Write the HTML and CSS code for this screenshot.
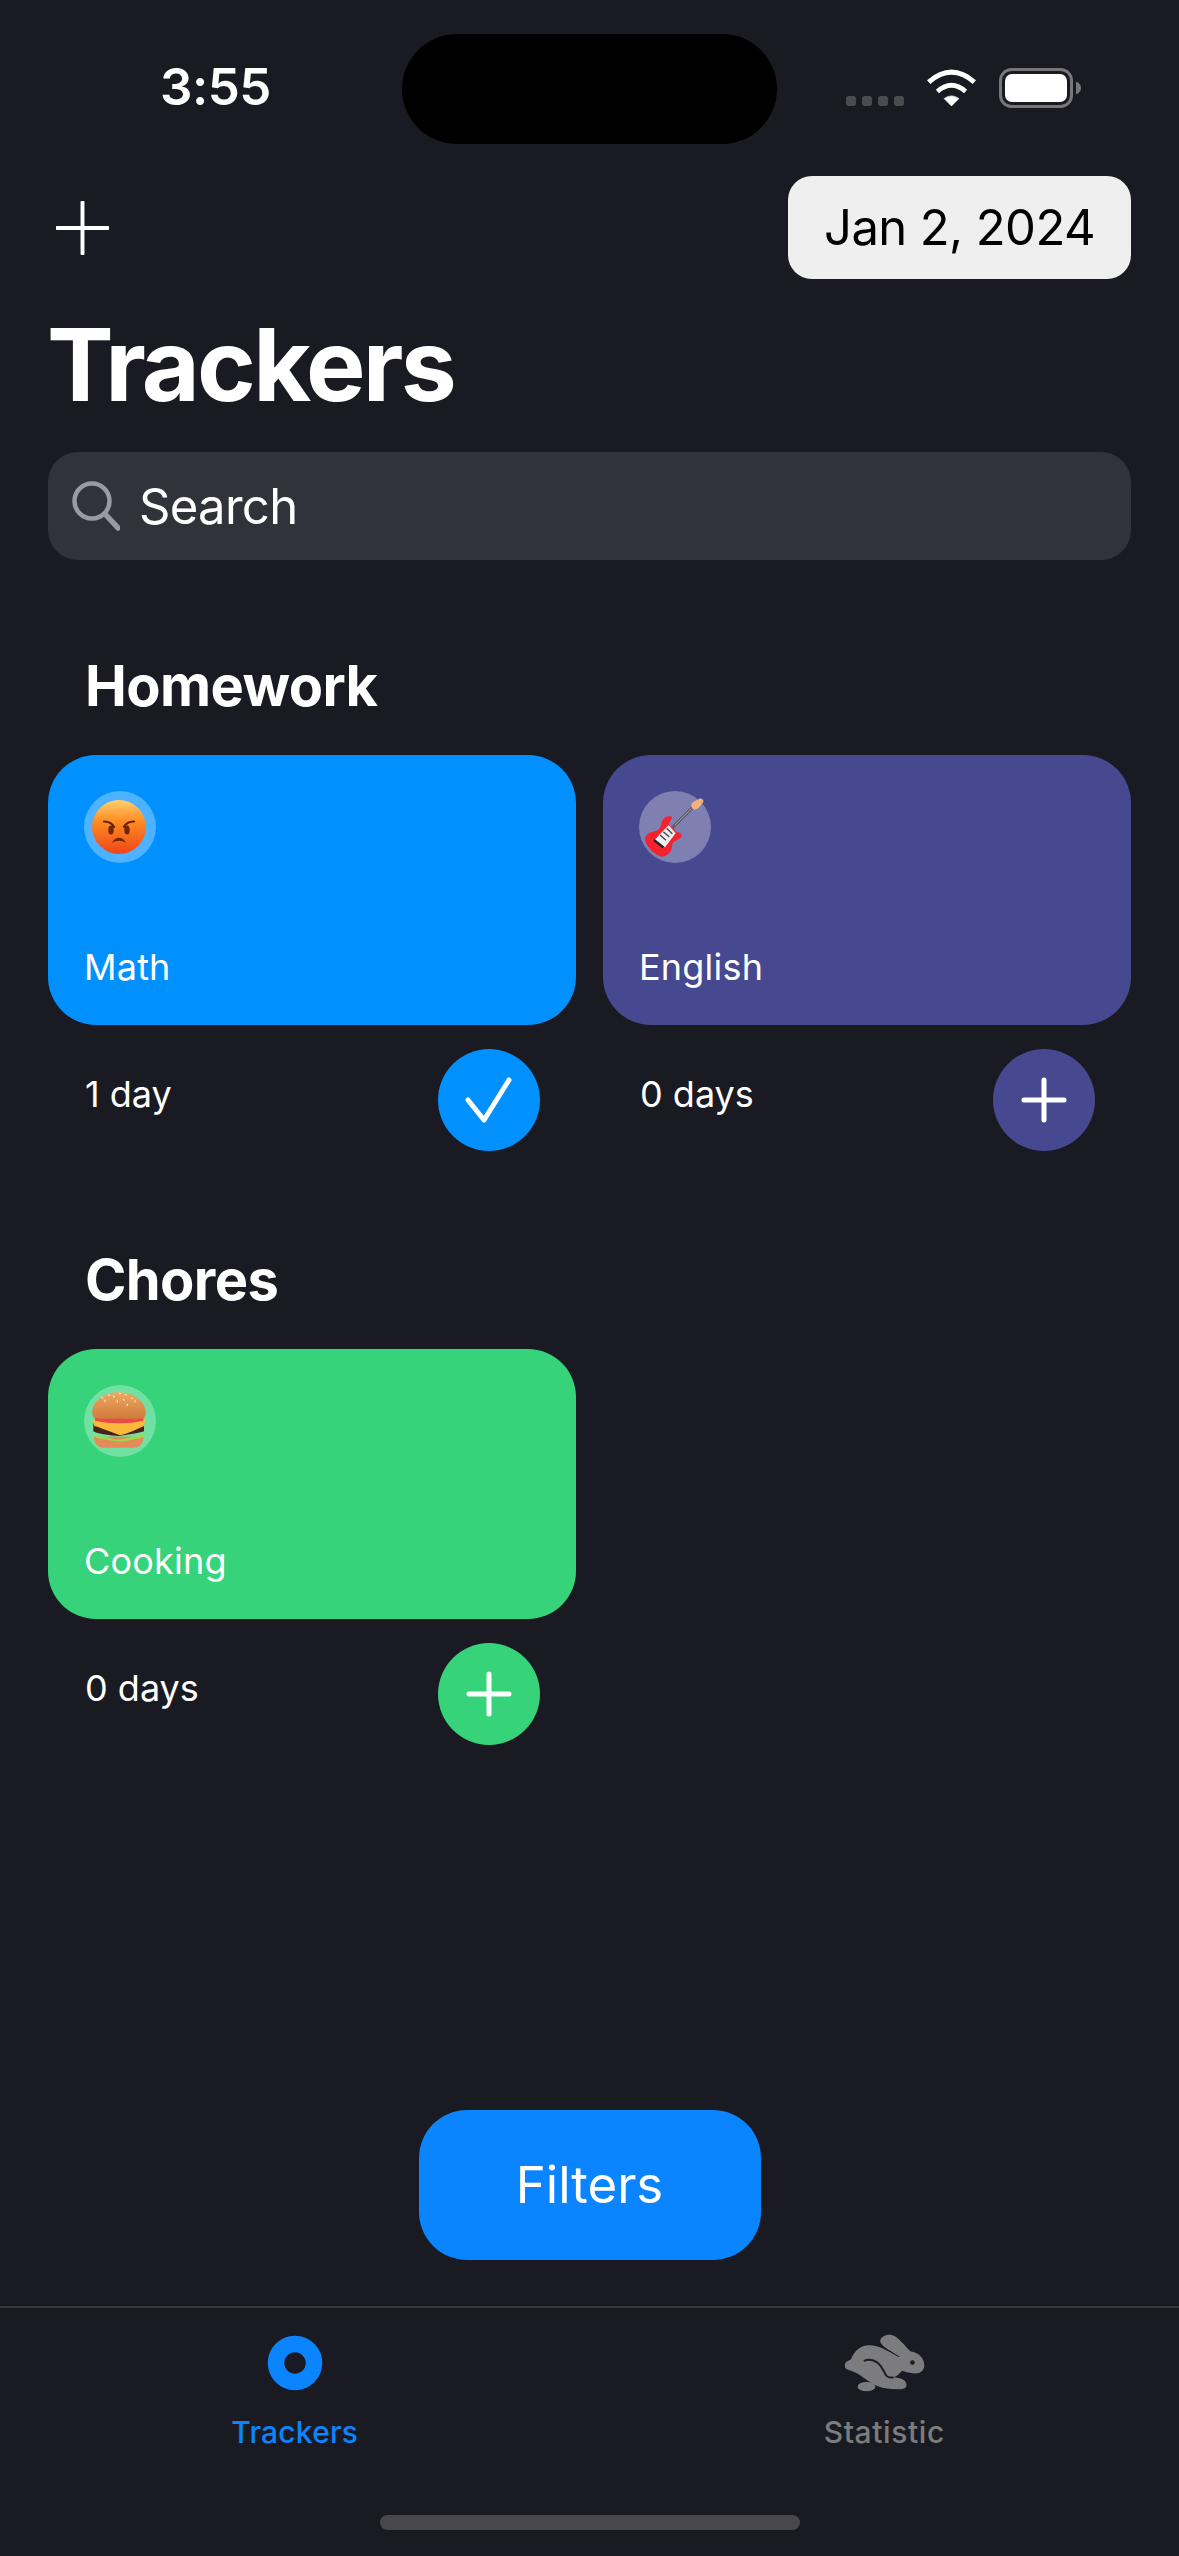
FILE: index.html
```html
<!DOCTYPE html>
<html lang="en">
<head>
<meta charset="utf-8">
<title>Trackers</title>
<link rel="stylesheet" href="styles.css">
</head>
<body>
<div class="screen">
  <div class="island"></div>
  <header class="status">
    <span class="time">3:55</span>
    <div class="status-icons">
      <div class="dots"><i></i><i></i><i></i><i></i></div>
      <svg class="wifi" viewBox="318 55 152 116"><path d="M326 97Q394 38 462 97" fill="none" stroke="#fff" stroke-width="15"/><path d="M352 125Q394 88 436 125" fill="none" stroke="#fff" stroke-width="14"/><path d="M372 146Q394 130 416 146L394 168Z" fill="#fff" stroke="#fff" stroke-width="2" stroke-linejoin="round"/></svg>
      <svg class="battery" viewBox="0 0 82 40"><rect x="1.5" y="1.5" width="71" height="37" rx="11" fill="none" stroke="#77777b" stroke-width="3"/><rect x="6" y="6" width="62" height="28" rx="7" fill="#fff"/><path d="M77 13.500C80.500 15 82 17 82 20C82 23 80.500 25 77 26.500Z" fill="#77777b"/></svg>
    </div>
  </header>

  <div class="toolbar">
    <svg class="add" viewBox="0 0 54 54"><path d="M27 1V53M1 27H53" stroke="#fff" stroke-width="4" stroke-linecap="round"/></svg>
    <div class="date">Jan 2, 2024</div>
  </div>

  <h1 class="title">Trackers</h1>

  <div class="search">
    <svg class="search-icon" viewBox="0 0 48 50"><circle cx="20" cy="20" r="17.500" fill="none" stroke="#9a9aa2" stroke-width="4.500"/><path d="M33 33L46 47" stroke="#9a9aa2" stroke-width="5.500" stroke-linecap="round"/></svg>
    <span>Search</span>
  </div>

  <section class="group">
    <h2>Homework</h2>
    <div class="grid">
      <article class="tracker">
        <div class="card blue">
          <div class="emoji">
            <svg viewBox="0 0 72 72">
              <defs><linearGradient id="face" x1="0" y1="0" x2="0" y2="1"><stop offset="0" stop-color="#ffcf70"/><stop offset=".4" stop-color="#ff8b22"/><stop offset="1" stop-color="#f0441a"/></linearGradient></defs>
              <circle cx="35" cy="36" r="27" fill="url(#face)"/>
              <path d="M20 30.500C24 30.500 28 32 30 36M50 30.500C46 30.500 42 32 40 36" fill="none" stroke="#5d1f00" stroke-width="2.200" stroke-linecap="round"/>
              <ellipse cx="27" cy="39" rx="2.700" ry="4.500" fill="#6d2800"/><ellipse cx="43" cy="39" rx="2.700" ry="4.500" fill="#6d2800"/>
              <path d="M28 52C31 45 39 45 42 52C38 49 32 49 28 52Z" fill="#6d2800"/>
            </svg>
          </div>
          <div class="name">Math</div>
        </div>
        <div class="foot">
          <span class="days">1 day</span>
          <div class="round blue"><svg viewBox="0 0 102 102"><path d="M30 51L46 71L71 31" fill="none" stroke="#fff" stroke-width="5" stroke-linecap="round" stroke-linejoin="round"/></svg></div>
        </div>
      </article>
      <article class="tracker">
        <div class="card purple">
          <div class="emoji">
            <svg viewBox="117 93 216 216">
              <path d="M215 205L285 135" stroke="#5f5f63" stroke-width="9"/>
              <path d="M274 135C276 124 290 122 298 116C305 114 312 120 310 126C304 134 296 148 284 149C278 148 273 142 274 135Z" fill="#f3b27a"/>
              <path d="M185 190C187 175 200 165 215 170C218 178 205 185 208 195L232 218C240 215 245 222 245 230C235 240 222 240 217 252C218 270 205 290 185 290C165 285 140 262 135 240C133 225 150 215 170 212C178 210 183 200 185 190Z" fill="#f5222d"/>
              <path d="M180 222L206 195L227 220L195 262L164 240Z" fill="#eeeeee"/>
              <path d="M162 240L190 262" stroke="#222" stroke-width="7"/>
              <path d="M180 225L198 241M190 215L208 231M200 205L217 221" stroke="#444" stroke-width="4"/>
              <path d="M225 195L275 145" stroke="#b8b8b8" stroke-width="2"/>
            </svg>
          </div>
          <div class="name">English</div>
        </div>
        <div class="foot">
          <span class="days">0 days</span>
          <div class="round purple"><svg viewBox="0 0 102 102"><path d="M51 31V71M31 51H71" stroke="#fff" stroke-width="5" stroke-linecap="round"/></svg></div>
        </div>
      </article>
    </div>
  </section>

  <section class="group next">
    <h2>Chores</h2>
    <div class="grid">
      <article class="tracker">
        <div class="card green">
          <div class="emoji">
            <svg viewBox="72 45 216 216">
              <defs><linearGradient id="bun" x1="0" y1="0" x2="0" y2="1"><stop offset="0" stop-color="#eea760"/><stop offset="1" stop-color="#d17b3c"/></linearGradient></defs>
              <path d="M102 200H250C250 220 240 233 220 233H132C112 233 102 220 102 200Z" fill="#e58a58"/>
              <path d="M97 192C115 200 135 198 150 205C165 212 190 208 205 204C225 198 245 196 255 184L252 198C242 208 220 206 205 212C185 216 160 214 145 210C130 206 105 208 97 192Z" fill="#9ad94f"/>
              <path d="M100 160H252V184C225 192 190 196 176 198C150 196 120 194 100 184Z" fill="#46241c"/>
              <path d="M97 150H257L252 168C235 176 205 190 180 196C160 188 125 174 103 168Z" fill="#fbb93c"/>
              <path d="M105 140H250V152C210 162 145 162 105 152Z" fill="#ee4a44"/>
              <path d="M97 130C97 90 135 67 177 67C220 67 257 92 257 130C257 146 245 147 230 146H122C108 147 97 145 97 130Z" fill="url(#bun)"/>
              <path d="M125 82l4 2M145 74l3 3M178 70l4 0M135 90l0 5M160 78l3 3M172 92l0 5M195 74l3 1M190 88l3 3M215 84l3 2M203 102l-2 5M225 92l0 4" stroke="#fbe9c8" stroke-width="3.500" stroke-linecap="round"/>
            </svg>
          </div>
          <div class="name">Cooking</div>
        </div>
        <div class="foot">
          <span class="days">0 days</span>
          <div class="round green"><svg viewBox="0 0 102 102"><path d="M51 31V71M31 51H71" stroke="#fff" stroke-width="5" stroke-linecap="round"/></svg></div>
        </div>
      </article>
    </div>
  </section>

  <div class="filters-wrap"><div class="filters">Filters</div></div>

  <nav class="tabbar">
    <div class="tabs">
      <div class="tab active">
        <svg class="tab-ico" viewBox="0 0 58 58"><circle cx="29" cy="29" r="19" fill="none" stroke="#0a84ff" stroke-width="16.500"/></svg>
        <span>Trackers</span>
      </div>
      <div class="tab">
        <svg class="tab-ico rabbit" viewBox="190 125 245 175">
          <path d="M300 150C296 135 318 124 335 128C355 133 372 160 392 178C415 180 433 198 433 220C433 236 420 245 403 244C390 243 378 241 366 236C358 245 350 252 340 256C360 256 378 262 379 278C380 290 368 293 350 292C330 291 310 290 292 283C270 272 255 262 240 250C225 240 212 236 200 232C190 228 190 212 200 207C205 205 208 205 212 200C222 175 240 160 265 159C295 158 320 175 352 193L360 195C340 180 305 165 300 150Z" fill="#7c7c7e"/>
          <path d="M250 206C280 195 300 215 312 240C316 252 322 258 340 256" fill="none" stroke="#1a1b22" stroke-width="6"/>
          <ellipse cx="258" cy="284" rx="27" ry="14" fill="#7c7c7e"/>
          <circle cx="397" cy="211" r="7" fill="#1a1b22"/>
        </svg>
        <span>Statistic</span>
      </div>
    </div>
    <div class="home"></div>
  </nav>
</div>
</body>
</html>
```
FILE: styles.css
```css
* { box-sizing: border-box; }
html, body { margin: 0; padding: 0; background: #1a1b22; }
body { font-family: Inter, "Liberation Sans", sans-serif; color: #fff; }

.screen {
  position: relative;
  width: 1179px;
  height: 2556px;
  display: flex;
  flex-direction: column;
  background: #1a1b22;
  overflow: hidden;
}

.island {
  position: absolute;
  left: 402px;
  top: 34px;
  width: 375px;
  height: 110px;
  border-radius: 55px;
  background: #000;
}

.status {
  height: 176px;
  display: flex;
  align-items: flex-start;
  justify-content: space-between;
  padding: 56px 98px 0 160px;
}
.time { font-size: 51px; line-height: 62px; font-weight: 600; letter-spacing: -0.5px; }
.status-icons { display: flex; align-items: flex-start; margin-top: 12px; }
.dots { display: flex; gap: 6px; margin-top: 28px; margin-right: 22px; }
.dots i { width: 10px; height: 10px; border-radius: 3px; background: #4c4c50; }
.wifi { width: 51px; height: 39px; margin-right: 22px; }
.battery { width: 82px; height: 40px; }

.toolbar {
  height: 103px;
  display: flex;
  align-items: center;
  justify-content: space-between;
  padding: 0 48px 0 56px;
}
.add { width: 53px; height: 54px; }
.date {
  width: 343px;
  height: 103px;
  display: flex;
  align-items: center;
  justify-content: center;
  border-radius: 24px;
  background: #efefef;
  color: #000;
  font-size: 49px;
  letter-spacing: -0.6px;
}

.title {
  margin: 26px 0 0 47px;
  font-size: 100px;
  line-height: 120px;
  font-weight: 700;
  letter-spacing: -2.8px;
}

.search {
  margin: 27px 48px 0;
  height: 108px;
  display: flex;
  align-items: center;
  gap: 19px;
  padding: 0 24px;
  border-radius: 30px;
  background: #32323a;
  font-size: 49px;
  letter-spacing: -0.7px;
}
.search-icon { width: 48px; height: 50px; }

.group { margin-top: 92px; padding: 0 48px; }
.group.next { margin-top: 95px; }
.group h2 {
  margin: 0 0 35px 37px;
  font-size: 56px;
  line-height: 68px;
  font-weight: 700;
  letter-spacing: -0.6px;
}
.grid { display: grid; grid-template-columns: 528px 528px; gap: 27px; }

.card {
  height: 270px;
  padding: 36px;
  border-radius: 48px;
  display: flex;
  flex-direction: column;
  justify-content: space-between;
}
.blue { background: #0091ff; }
.purple { background: #46498f; }
.green { background: #36d37a; }

.emoji {
  width: 72px;
  height: 72px;
  border-radius: 50%;
  background: rgba(255, 255, 255, .3);
}
.emoji svg { display: block; width: 72px; height: 72px; overflow: visible; }

.name { font-size: 36px; line-height: 44px; font-weight: 400; letter-spacing: .2px; }

.foot {
  display: flex;
  justify-content: space-between;
  align-items: flex-start;
  padding: 24px 36px 0 37px;
}
.days { margin-top: 23px; font-size: 36px; line-height: 44px; font-weight: 400; }
.round { width: 102px; height: 102px; border-radius: 50%; }
.round svg { display: block; width: 102px; height: 102px; }

.filters-wrap { margin-top: auto; margin-bottom: 46px; display: flex; justify-content: center; }
.filters {
  width: 342px;
  height: 150px;
  display: flex;
  align-items: center;
  justify-content: center;
  border-radius: 48px;
  background: #0a84ff;
  font-size: 51px;
  letter-spacing: 0;
  padding-bottom: 2px;
}

.tabbar {
  height: 250px;
  border-top: 2px solid #38383c;
  display: flex;
  flex-direction: column;
  align-items: center;
}
.tabs { width: 100%; display: grid; grid-template-columns: 1fr 1fr; padding-top: 26px; }
.tab {
  display: flex;
  flex-direction: column;
  align-items: center;
  gap: 20px;
  color: #7c7c7e;
  font-size: 30px;
  line-height: 40px;
  font-weight: 500;
  letter-spacing: .6px;
}
.tab.active { color: #0a84ff; letter-spacing: .2px; }
.tab-ico { width: 58px; height: 58px; }
.tab-ico.rabbit { width: 81px; }
.home {
  margin-top: 63px;
  width: 420px;
  height: 15px;
  border-radius: 8px;
  background: #48484c;
}
```
